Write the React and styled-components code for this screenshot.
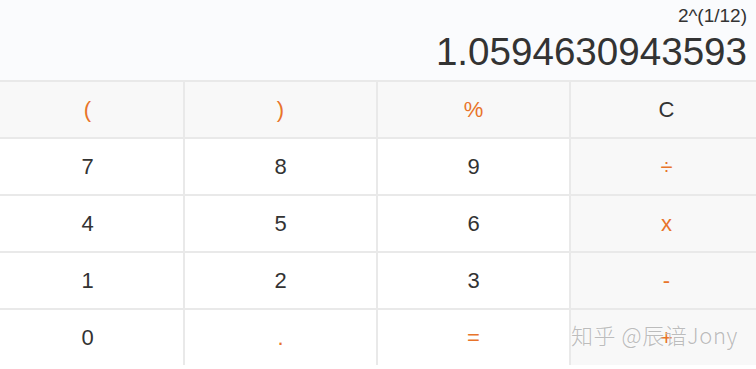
import React from 'react';
import styled, { createGlobalStyle } from 'styled-components';

const GlobalStyle = createGlobalStyle`
  html, body {
    margin: 0;
    padding: 0;
    background: #fff;
    overflow: hidden;
  }
  body {
    font-family: "Liberation Sans", Arial, sans-serif;
  }
`

const Page = styled.div`
  position: relative;
  width: 756px;
  height: 369px;
  overflow: hidden;
  background: #fff;
`

const Display = styled.div`
  height: 80px;
  background: #fafbfd;
  display: flex;
  flex-direction: column;
  align-items: flex-end;
  padding-right: 9px;
  box-sizing: border-box;
`

const Expression = styled.div`
  font-size: 19px;
  color: #333;
  line-height: 22px;
  margin-top: 5px;
`

const Result = styled.div`
  font-size: 38.6px;
  color: #333;
  line-height: 44px;
  margin-top: 3px;
`

const Keypad = styled.div`
  display: grid;
  grid-template-columns: repeat(4, 191px);
  grid-auto-rows: 55px;
  gap: 2px;
  margin-left: -8px;
  width: 770px;
  background: #e9e9e9;
  border-top: 2px solid #e9e9e9;
`

const Key = styled.div`
  display: flex;
  align-items: center;
  justify-content: center;
  font-size: 22px;
  color: ${p => (p.$accent ? '#e8742a' : '#333')};
  background: ${p => (p.$shade ? '#f8f8f8' : '#fff')};
`

const Watermark = styled.div`
  position: absolute;
  right: 18px;
  bottom: 19px;
  font-family: "Noto Sans CJK SC", "Liberation Sans", sans-serif;
  font-weight: 300;
  font-size: 22px;
  color: rgba(180, 180, 180, 0.9);
  text-shadow: 0 0 2px rgba(255, 255, 255, 0.9);
  letter-spacing: 0.6px;
`

const keys = [
  { label: '(', accent: true, shade: true },
  { label: ')', accent: true, shade: true },
  { label: '%', accent: true, shade: true },
  { label: 'C', shade: true },
  { label: '7' }, { label: '8' }, { label: '9' },
  { label: '÷', accent: true, shade: true },
  { label: '4' }, { label: '5' }, { label: '6' },
  { label: 'x', accent: true, shade: true },
  { label: '1' }, { label: '2' }, { label: '3' },
  { label: '-', accent: true, shade: true },
  { label: '0' },
  { label: '.', accent: true },
  { label: '=', accent: true },
  { label: '+', accent: true, shade: true },
];

const App = () => {
  return (
    <Page>
      <GlobalStyle />
      <Display>
        <Expression>2^(1/12)</Expression>
        <Result>1.0594630943593</Result>
      </Display>
      <Keypad>
        {keys.map((k, i) => (
          <Key key={i} $accent={k.accent} $shade={k.shade}>
            {k.label}
          </Key>
        ))}
      </Keypad>
      <Watermark>知乎 @辰谙Jony</Watermark>
    </Page>
  );
};

export default App;
